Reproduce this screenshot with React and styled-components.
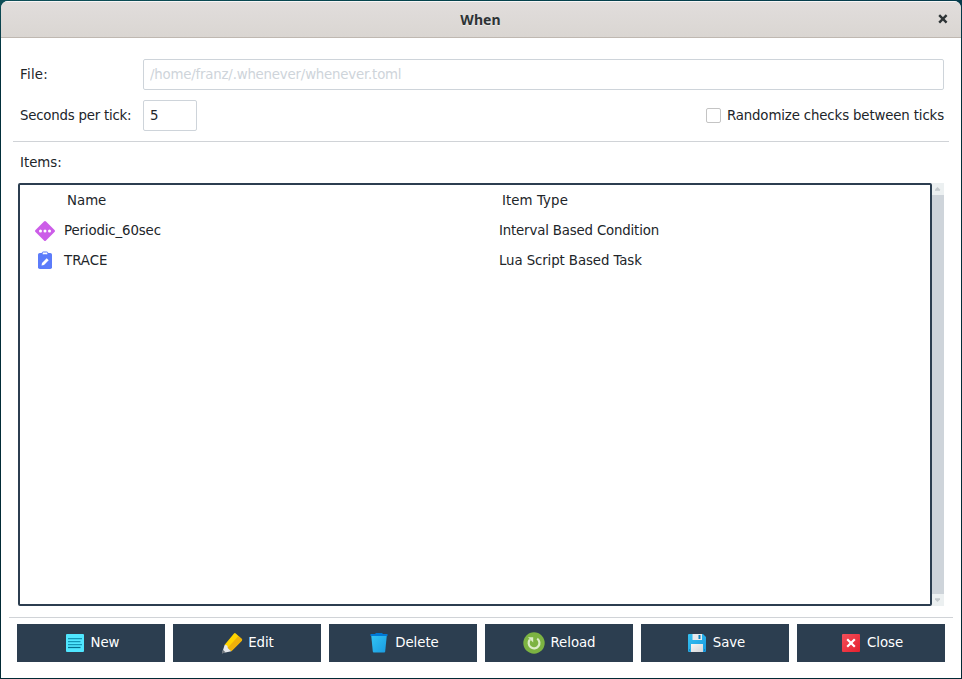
import React from "react";
import styled, { createGlobalStyle } from "styled-components";

const GlobalStyle = createGlobalStyle`
  *, *::before, *::after { box-sizing: border-box; }
  body {
    margin: 0;
    overflow: hidden;
    background: linear-gradient(90deg, #0f5059, #04434c 45%, #063c4d);
  }
`;

const Desktop = styled.div`
  width: 962px;
  height: 679px;
  padding: 1px;
  background: linear-gradient(180deg, transparent 0, #02303c 60px, #022a35 100%);
  font-family: "DejaVu Sans", sans-serif;
  font-size: 13.333px;
  color: #212529;
`;

const Window = styled.main`
  display: flex;
  flex-direction: column;
  width: 960px;
  height: 677px;
  background: #fff;
  border-radius: 7px 7px 0 0;
  overflow: hidden;
`;

const TitleBar = styled.header`
  display: grid;
  grid-template-columns: 35px 1fr 36px;
  align-items: center;
  height: 37px;
  flex: none;
  border-top: 1px solid #f8f6f7;
  border-bottom: 1px solid #bfb8b1;
  background: linear-gradient(#e1dddc, #dad6d2);
`;

const Title = styled.h1`
  grid-column: 2;
  margin: 0;
  text-align: center;
  font: 700 14px/20px "Noto Sans", sans-serif;
  letter-spacing: 0.1px;
  color: #2e3436;
  text-shadow: 0 1px #eeecea;
`;

const CloseWindow = styled.button`
  display: flex;
  justify-content: center;
  height: 11px;
  padding: 0;
  border: 0;
  background: none;
`;

const Form = styled.section`
  display: grid;
  grid-template-columns: 123px 1fr;
  row-gap: 10px;
  padding: 21px 17px 10px 19px;
`;

const Label = styled.label`
  padding-top: 1px;
  line-height: 30px;
  letter-spacing: ${(p) => p.$spacing || "0"};
  white-space: nowrap;
`;

const Field = styled.input`
  width: ${(p) => p.$width || "100%"};
  height: 31px;
  padding: 0 6px 1px;
  border: 1px solid #ced4da;
  border-radius: 2px;
  background: #fff;
  color: ${(p) => (p.$muted ? "#ced4da" : "#212529")};
  font: inherit;
  letter-spacing: ${(p) => (p.$muted ? "-0.2px" : "0")};
  outline: 0;
`;

const TickRow = styled.div`
  display: flex;
  justify-content: space-between;
`;

const CheckLabel = styled.label`
  display: flex;
  align-items: center;
  gap: 6px;
  height: 30px;
  letter-spacing: -0.14px;
  white-space: nowrap;
`;

const CheckBox = styled.span`
  width: 15px;
  height: 15px;
  margin-top: 1px;
  border: 1px solid #c4c4c4;
  border-radius: 2px;
`;

const Rule = styled.hr`
  flex: none;
  width: ${(p) => p.$width};
  height: 1px;
  margin: 0 auto;
  border: 0;
  background: #d0d3d7;
`;

const ListHeading = styled.div`
  height: 41px;
  padding: 6px 19px 5px;
  line-height: 30px;
`;

const ListArea = styled.section`
  display: flex;
  height: 423px;
  margin: 0 17px 11px;
`;

const Tree = styled.div`
  flex: 1;
  border: 2px solid #2c3e50;
  border-radius: 2px;
`;

const TreeRow = styled.div`
  display: grid;
  grid-template-columns: 44px 435px 1fr;
  align-items: center;
  height: 30px;
  padding-left: ${(p) => (p.$header ? "3px" : "0")};
`;

const IconCell = styled.span`
  display: flex;
  justify-content: center;
  padding: 2px 0 0 6px;
`;

const Cell = styled.span`
  letter-spacing: ${(p) => p.$spacing || "0"};
  white-space: nowrap;
`;

const ScrollBar = styled.div`
  display: flex;
  flex-direction: column;
  width: 12px;
  background: #ecf0f1;
`;

const ScrollArrow = styled.span`
  display: flex;
  align-items: center;
  justify-content: center;
  height: 12px;
`;

const Thumb = styled.div`
  flex: 1;
  background: #ced4da;
`;

const Actions = styled.footer`
  display: flex;
  gap: 8px;
  padding: 6px 16px 0;
`;

const ActionButton = styled.button`
  display: flex;
  align-items: center;
  justify-content: center;
  gap: 4px;
  width: 148px;
  height: 38px;
  padding: 0 0 2px;
  border: 0;
  background: #2c3e50;
  color: #fff;
  font: inherit;
  letter-spacing: -0.05px;
`;

const ButtonIcon = styled.svg`
  display: block;
  flex: none;
  width: 24px;
  height: 24px;
  margin-top: 2px;
`;

const Glyph = styled.svg`
  display: block;
  flex: none;
  width: ${(p) => p.$size}px;
  height: ${(p) => p.$size}px;
`;

const icons = {
  New: (
    <>
      <rect x="3" y="3" width="18" height="18" rx="1" fill="#50e6ff" />
      <path d="M5 7.500h14M5 10.500h12.500M5 13.500h14" stroke="#1496b6" strokeWidth="1.250" />
      <path d="M5 16.500h12.500" stroke="#056f8e" strokeWidth="1.250" />
    </>
  ),
  Edit: (
    <>
      <path d="m4.700 13.800 9.300-11.200q.8-1 1.800-.1l6 5.600q.8.800 0 1.700L11.300 20.300z" fill="#ffd400" />
      <path d="m18.400 5 3.400 3.100q.8.800 0 1.700L11.300 20.300 7.500 17z" fill="#efb10a" />
      <path d="m4.700 13.800 2.500.7.8 2.700 3.300 3.100L2 22.200z" fill="#e6e8eb" />
      <path d="m2.900 18.800 2.900 2.700L1.800 22.500z" fill="#6c747c" />
    </>
  ),
  Delete: (
    <>
      <path d="m4.200 4.500 1.600 16q.1.900 1 .9h10.400q.9 0 1-.9l1.600-16z" fill="url(#bin)" />
      <path d="M3.500 3H8l1-1h6l1 1h4.500v2h-17z" fill="#0078d4" />
    </>
  ),
  Reload: (
    <>
      <circle cx="12" cy="12" r="10.700" fill="#7cb342" />
      <path d="M15.200 7.600A5.400 5.400 0 1 1 7.900 8.500" fill="none" stroke="#dcedc8" strokeWidth="2.200" />
      <path d="M6 6.300h5.200v5.200z" fill="#dcedc8" />
    </>
  ),
  Save: (
    <>
      <path d="M3 4q0-1 1-1h14l3 3v14q0 1-1 1H4q-1 0-1-1z" fill="url(#disk)" />
      <path d="M7.500 3h9.500v6H7.500z" fill="#e8eaec" />
      <path d="M13.500 4h2v4h-2z" fill="#0e83bd" />
      <path d="M6 13h12v8H6z" fill="url(#paper)" />
      <path d="M4 18.500h1v1H4zm15 0h1v1h-1z" fill="#08699b" />
    </>
  ),
  Close: (
    <>
      <rect x="3" y="3" width="18" height="18" rx="1" fill="url(#close)" />
      <path d="m8.200 8.200 7.600 7.600m0-7.600-7.600 7.600" stroke="#fff" strokeWidth="2.200" />
    </>
  ),
};

const actions = ["New", "Edit", "Delete", "Reload", "Save", "Close"];

function Definitions() {
  return (
    <defs>
      <linearGradient id="bin" x1="0" y1="0" x2="1" y2="1">
        <stop stopColor="#32c4f4" /><stop offset="1" stopColor="#199ae0" />
      </linearGradient>
      <linearGradient id="disk" x1="0" y1="0" x2="1" y2="1">
        <stop stopColor="#35c1f1" /><stop offset="1" stopColor="#199ae0" />
      </linearGradient>
      <linearGradient id="paper" x1="0" y1="0" x2="1" y2="1">
        <stop stopColor="#f5f5f5" /><stop offset="1" stopColor="#d3d5d8" />
      </linearGradient>
      <linearGradient id="close" x1="0" y1="0" x2="1" y2="1">
        <stop stopColor="#f44f5a" /><stop offset="1" stopColor="#e5202e" />
      </linearGradient>
    </defs>
  );
}

export default function App() {
  return (
    <Desktop>
      <GlobalStyle />
      <Window>
        <TitleBar>
          <Title>When</Title>
          <CloseWindow aria-label="Close window">
            <Glyph $size={10} viewBox="0 0 10 10">
              <path d="m1.200 1.200 7.400 7.400m0-7.400-7.400 7.400" stroke="#2e3436" strokeWidth="2.400" />
            </Glyph>
          </CloseWindow>
        </TitleBar>
        <Form>
          <Label $spacing="0.25px">File:</Label>
          <Field $muted readOnly value="/home/franz/.whenever/whenever.toml" />
          <Label $spacing="-0.22px">Seconds per tick:</Label>
          <TickRow>
            <Field $width="54px" readOnly value="5" />
            <CheckLabel><CheckBox />Randomize checks between ticks</CheckLabel>
          </TickRow>
        </Form>
        <Rule $width="936px" />
        <ListHeading>Items:</ListHeading>
        <ListArea>
          <Tree>
            <TreeRow $header><span /><Cell>Name</Cell><Cell $spacing="0.08px">Item Type</Cell></TreeRow>
            <TreeRow>
              <IconCell>
                <Glyph $size={20} viewBox="0 0 20 20">
                  <path d="M9 .5q1-1 2 0L19.500 9q1 1 0 2L11 19.500q-1 1-2 0L.5 11q-1-1 0-2z" fill="#cc5de8" />
                  <circle cx="5.500" cy="10" r="1.500" fill="#fff" />
                  <circle cx="10" cy="10" r="1.500" fill="#fff" />
                  <circle cx="14.500" cy="10" r="1.500" fill="#fff" />
                </Glyph>
              </IconCell>
              <Cell $spacing="-0.13px">Periodic_60sec</Cell><Cell $spacing="-0.17px">Interval Based Condition</Cell>
            </TreeRow>
            <TreeRow>
              <IconCell>
                <Glyph $size={20} viewBox="0 0 20 20">
                  <rect x="3" y="2" width="14" height="16" rx="1.800" fill="#5c7cfa" />
                  <rect x="7.200" y="1" width="5.600" height="2.800" rx="1" fill="#fff" stroke="#5c7cfa" />
                  <path d="m6.500 14.500.5-2.500 4.700-4.700 2 2L9 14z" fill="#fff" />
                </Glyph>
              </IconCell>
              <Cell>TRACE</Cell><Cell $spacing="-0.1px">Lua Script Based Task</Cell>
            </TreeRow>
          </Tree>
          <ScrollBar>
            <ScrollArrow><Glyph $size={6} viewBox="0 0 6 6"><path d="M0 4.700V3.500L2.500 1 5 3.500v1.200z" fill="#c5cacd" /></Glyph></ScrollArrow>
            <Thumb />
            <ScrollArrow><Glyph $size={6} viewBox="0 0 6 6"><path d="M0 1.300v1.200L2.500 5 5 2.500V1.300z" fill="#c5cacd" /></Glyph></ScrollArrow>
          </ScrollBar>
        </ListArea>
        <Rule $width="944px" />
        <Actions>
          {actions.map((name) => (
            <ActionButton key={name}>
              <ButtonIcon viewBox="0 0 24 24"><Definitions />{icons[name]}</ButtonIcon>
              {name}
            </ActionButton>
          ))}
        </Actions>
      </Window>
    </Desktop>
  );
}
